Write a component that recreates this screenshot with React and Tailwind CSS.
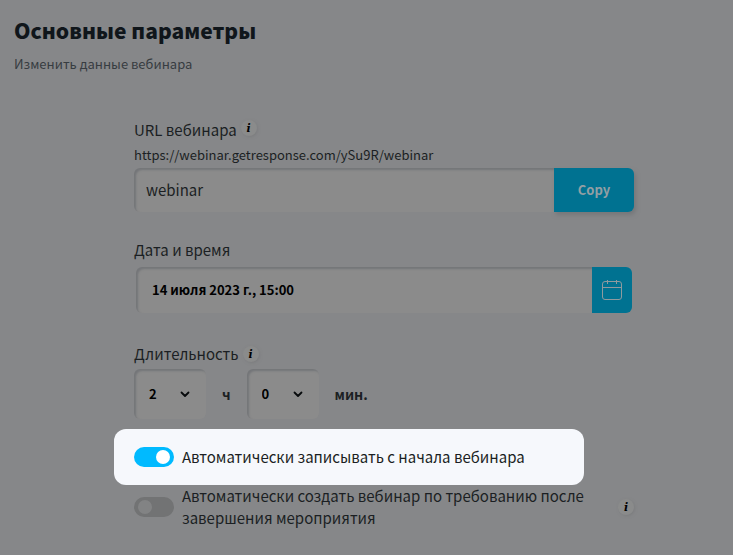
import React, { useState } from 'react';

const HOURS = [0, 1, 2, 3, 4, 5];
const MINUTES = [0, 15, 30, 45];

function InfoButton() {
  return (
    <button
      type="button"
      aria-label="Info"
      className="flex h-4 w-4 shrink-0 items-center justify-center rounded-full bg-[#8a8b8b] font-['DejaVu_Serif',serif] text-[11px] leading-none font-bold text-black italic shadow-[1px_1px_3px_#7c7d7f]"
    >
      i
    </button>
  );
}

function CalendarIcon() {
  return (
    <svg width="20" height="20" viewBox="0 0 20 20" fill="none" stroke="#8f9a9e" strokeWidth="1" aria-hidden="true">
      <rect x="0.5" y="1.500" width="19" height="18" rx="2.500" />
      <path d="M0.500 7.500h19M5.500 0v4M14.500 0v4" />
    </svg>
  );
}

function TimeSelect({ id, label, value, options, onChange }) {
  return (
    <div className="relative w-[72px]">
      <select
        id={id}
        aria-label={label}
        value={value}
        onChange={(e) => onChange(Number(e.target.value))}
        className="h-[50px] w-full appearance-none rounded-md bg-[#8b8b8b] pl-[15px] text-[13px] font-bold text-black shadow-[inset_2px_2px_2px_#747679]"
      >
        {options.map((o) => (
          <option key={o} value={o}>{o}</option>
        ))}
      </select>
      <svg
        className="pointer-events-none absolute top-5 right-4 text-[#070a0c]"
        width="10" height="10" viewBox="0 0 10 10" fill="none" stroke="currentColor" strokeWidth="1.8" strokeLinecap="round" strokeLinejoin="round"
      >
        <path d="M1.500 3.500 5 7l3.500-3.500" />
      </svg>
    </div>
  );
}

function Toggle({ id, checked, onChange }) {
  return (
    <span className="relative h-5 w-10 shrink-0">
      <input
        id={id}
        type="checkbox"
        role="switch"
        checked={checked}
        onChange={(e) => onChange(e.target.checked)}
        className="peer block h-5 w-10 appearance-none rounded-full bg-[#727374] checked:bg-[#00baff]"
      />
      <span className="pointer-events-none absolute top-[3px] left-[4px] h-[14px] w-[14px] rounded-full bg-[#828384] peer-checked:left-[22px] peer-checked:bg-white" />
    </span>
  );
}

export default function App() {
  const [slug, setSlug] = useState('webinar');
  const [date, setDate] = useState('14 июля 2023 г., 15:00');
  const [hours, setHours] = useState(2);
  const [minutes, setMinutes] = useState(0);
  const [autoRecord, setAutoRecord] = useState(true);
  const [onDemand, setOnDemand] = useState(false);

  return (
    <main className="min-h-screen bg-[#868789] px-[14px] pt-[14px] pb-6 font-['Noto_Sans_CJK_SC','Noto_Sans',sans-serif] text-[#1b1f23]">
      <h1 className="text-[21px] leading-8 font-black text-[#10161b]">Основные параметры</h1>
      <p className="mt-1 text-[13px] leading-7 text-[#373c41]">Изменить данные вебинара</p>

      <form className="mt-[42px] ml-[120px] max-w-[500px]" onSubmit={(e) => e.preventDefault()}>
        <div className="flex h-5 items-start gap-1">
          <label htmlFor="slug" className="text-[15px] leading-5">URL вебинара</label>
          <InfoButton />
        </div>
        <p className="mt-1 mb-[3px] text-[13px] leading-[21px]">https://webinar.getresponse.com/ySu9R/webinar</p>
        <div className="flex h-11">
          <input
            id="slug"
            type="text"
            value={slug}
            onChange={(e) => setSlug(e.target.value)}
            className="min-w-0 flex-1 rounded-l-md bg-[#8b8b8b] px-3 text-[15px] shadow-[inset_2px_2px_2px_#747679]"
          />
          <button type="button" className="w-20 rounded-r-md bg-[#007291] text-[13px] font-bold text-[#929fa4] shadow-[2px_3px_4px_#75777a]">
            Copy
          </button>
        </div>

        <label htmlFor="date" className="mt-7 block text-[15px] leading-5">Дата и время</label>
        <div className="mx-[2px] mt-[7px] flex h-[46px]">
          <input
            id="date"
            type="text"
            value={date}
            onChange={(e) => setDate(e.target.value)}
            className="min-w-0 flex-1 rounded-l-md bg-[#8b8b8b] px-4 text-[13px] font-bold text-black shadow-[inset_2px_2px_2px_#747679]"
          />
          <button type="button" aria-label="Календарь" className="flex w-10 items-center justify-center rounded-r-md bg-[#007291]">
            <CalendarIcon />
          </button>
        </div>

        <div className="mt-[31px] flex h-5 items-center gap-1">
          <label htmlFor="hours" className="text-[15px] leading-5">Длительность</label>
          <InfoButton />
        </div>
        <div className="mt-[5px] flex items-center gap-4">
          <TimeSelect id="hours" label="Часы" value={hours} options={HOURS} onChange={setHours} />
          <span className="text-sm leading-6 font-bold">ч</span>
          <TimeSelect id="minutes" label="Минуты" value={minutes} options={MINUTES} onChange={setMinutes} />
          <span className="text-sm leading-6 font-bold">мин.</span>
        </div>

        <div className="mt-[10px] -ml-5 flex h-14 w-[470px] items-center gap-2 rounded-xl bg-[#f6f8fc] px-5">
          <Toggle id="auto-record" checked={autoRecord} onChange={setAutoRecord} />
          <label htmlFor="auto-record" className="text-[15px] leading-[22px]">Автоматически записывать с начала вебинара</label>
        </div>

        <div className="flex items-center gap-2">
          <Toggle id="on-demand" checked={onDemand} onChange={setOnDemand} />
          <label htmlFor="on-demand" className="flex-1 pr-5 text-[15px] leading-[22px]">
            Автоматически создать вебинар по требованию после завершения мероприятия
          </label>
          <InfoButton />
        </div>
      </form>
    </main>
  );
}
